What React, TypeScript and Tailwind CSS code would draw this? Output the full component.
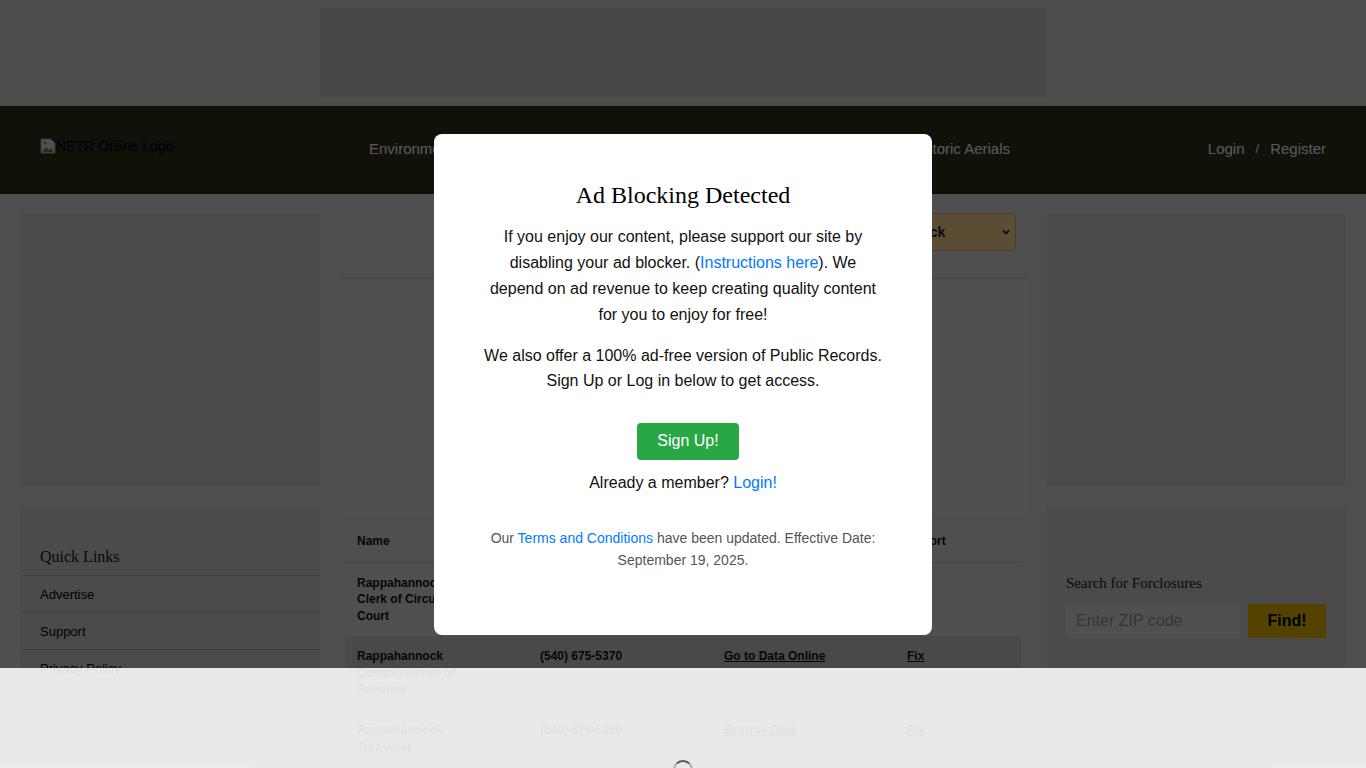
import React from 'react'

const sans = { fontFamily: '"Liberation Sans", Arial, sans-serif' }
const serif = { fontFamily: '"Liberation Serif", "Times New Roman", serif' }

const rows = [
  { name: 'Rappahannock Clerk of Circuit Court', phone: '(540) 675-5350', link: 'Go to Data Online', fix: 'Fix' },
  { name: 'Rappahannock Commissioner of Revenue', phone: '(540) 675-5370', link: 'Go to Data Online', fix: 'Fix' },
  { name: 'Rappahannock Treasurer', phone: '(540) 675-5380', link: 'Browse Data', fix: 'Fix' },
  { name: 'Rappahannock County Assessor', phone: '(540) 675-5372', link: 'Go to Data Online', fix: 'Fix' },
]

function BrokenImage() {
  return (
    <svg width="16" height="16" viewBox="0 0 16 16" className="shrink-0">
      <path d="M1 1h10l4 4v10H1z" fill="#e8e8e8" stroke="#9a9a9a" />
      <path d="M2 14l4-5 3 3 2-2 3 4z" fill="#4a9a4a" />
      <circle cx="5" cy="5" r="1.5" fill="#5a8ad0" />
    </svg>
  )
}

function Chevron() {
  return (
    <svg width="10" height="10" viewBox="0 0 10 10">
      <path d="M2 3.5l3 3 3-3" fill="none" stroke="#222" strokeWidth="1.8" />
    </svg>
  )
}

export default function App() {
  return (
    <div className="relative h-[768px] overflow-hidden bg-[#e2e2e2]" style={sans}>
      {/* top ad */}
      <div className="h-[106px] bg-[#dcdcdc] pt-2">
        <div className="mx-auto h-[89px] w-[726px] bg-[#cbcbcb] border border-[#d2d2d2]" />
      </div>

      {/* header */}
      <header className="flex h-[88px] items-center bg-[#31311f] pl-10 pr-10">
        <div className="flex w-[329px] items-start self-start pt-[32px] text-[14px] leading-[16px] text-black">
          <BrokenImage />
          <span>NETR Online Logo</span>
        </div>
        <nav className="-mt-[2px] flex w-[641px] justify-between text-[15px] text-white">
          <a>Environmental</a>
          <a>Public Records</a>
          <a>Property Search</a>
          <a>Historic Aerials</a>
        </nav>
        <div className="-mt-[2px] ml-auto flex items-center gap-[11px] text-[15px] text-white">
          <a>Login</a>
          <span className="text-[13px]">/</span>
          <a>Register</a>
        </div>
      </header>

      {/* body */}
      <div className="grid grid-cols-[300px_1fr_299px] gap-[18px] px-5 pt-[19px]">
        {/* left */}
        <aside className="flex flex-col gap-[21px]">
          <div className="h-[272px] bg-[#d5d5d5]" />
          <div className="bg-[#d6d6d6] pt-[39px] pb-3">
            <h3 className="px-5 pb-[6px] text-[16px] leading-[24px] text-[#1a1a1a]" style={serif}>Quick Links</h3>
            {['Advertise', 'Support', 'Privacy Policy'].map((l) => (
              <div key={l} className="border-t border-[#b5b5b5] px-5 pt-[9px] pb-[7px] text-[13px] leading-[20px] text-black">
                {l}
              </div>
            ))}
          </div>
        </aside>

        {/* center */}
        <main>
          <div className="flex h-[38px] justify-end gap-2 pr-[13px]">
            <div className="flex w-[150px] items-center justify-between rounded border border-[#c9b27a] bg-[#ffe095] px-3 text-[14px] font-bold text-[#222]">
              Virginia <Chevron />
            </div>
            <div className="flex w-[184px] items-center justify-between rounded border border-[#c9b27a] bg-[#ffe095] pl-3 pr-[4px] text-[14px] font-bold text-[#222]">
              Rappahannock <Chevron />
            </div>
          </div>
          <div className="mt-[27px] border-t border-[#c4c4c4]" />
          <div className="h-[236px] bg-[#e5e5e5]" />
          <table className="mx-[7px] mt-[5px] w-[676px] border-collapse text-left text-[12px] text-[#111]">
            <thead>
              <tr className="h-[42px] border-b border-[#c8c8c8]">
                <th className="w-[183px] pl-3 font-bold">Name</th>
                <th className="w-[184px] pl-3 font-bold">Phone</th>
                <th className="w-[183px] pl-3 font-bold">Online</th>
                <th className="pl-3 font-bold">Report</th>
              </tr>
            </thead>
            <tbody>
              {rows.map((r, i) => (
                <tr key={r.name} className={`h-[74px] align-top ${i % 2 === 1 ? 'bg-[#d2d2d2]' : ''}`}>
                  <td className="py-3 pl-3 pr-16 font-semibold leading-[16.5px]">{r.name}</td>
                  <td className="py-3 pl-3 font-semibold leading-[16.5px]">{r.phone}</td>
                  <td className="py-3 pl-3 font-semibold leading-[16.5px] underline">{r.link}</td>
                  <td className="py-3 pl-3 font-semibold leading-[16.5px] underline">{r.fix}</td>
                </tr>
              ))}
            </tbody>
          </table>
        </main>

        {/* right */}
        <aside className="flex flex-col gap-[21px]">
          <div className="h-[272px] bg-[#d5d5d5]" />
          <div className="bg-[#d6d6d6] px-[19px] pt-[66px] pb-8">
            <h3 className="mb-[9px] text-[15px] text-[#1a1a1a]" style={serif}>Search for Forclosures</h3>
            <div className="flex gap-2">
              <div className="flex h-[34px] w-[174px] items-center bg-[#e6e6e6] px-[10px] text-[16px] text-[#999]">
                Enter ZIP code
              </div>
              <button className="h-[34px] w-[78px] bg-[#f0bf00] text-[16px] font-bold text-black">Find!</button>
            </div>
          </div>
        </aside>
      </div>

      {/* overlay */}
      <div className="absolute inset-0 flex items-center justify-center bg-black/65">
        <div className="h-[501px] w-[498px] rounded-lg bg-white px-12 pt-[47px] text-center">
          <h2 className="mb-[15px] text-[24px] leading-[28px] text-black" style={serif}>Ad Blocking Detected</h2>
          <p className="text-[16px] leading-[26px] text-[#111]">
            If you enjoy our content, please support our site by disabling your ad blocker. (
            <a className="text-[#007bff]">Instructions here</a>). We depend on ad revenue to keep creating quality
            content for you to enjoy for free!
          </p>
          <p className="mt-[15px] text-[16px] leading-[25px] text-[#111]">
            We also offer a 100% ad-free version of Public Records. Sign Up or Log in below to get access.
          </p>
          <button className="mt-[30px] ml-[10px] h-[37px] w-[102px] rounded bg-[#28a745] text-[16px] text-white">
            Sign Up!
          </button>
          <p className="mt-[10px] text-[16px] leading-[25.6px] text-[#111]">
            Already a member? <a className="text-[#007bff]">Login!</a>
          </p>
          <p className="mt-[32px] text-[14px] leading-[22px] text-[#555]">
            Our <a className="text-[#007bff]">Terms and Conditions</a> have been updated. Effective Date: September 19,
            2025.
          </p>
        </div>
      </div>

      {/* bottom bar */}
      <div className="absolute bottom-0 left-0 right-0 flex h-[100px] justify-center bg-white/[0.88]">
        <div className="mt-[92px] h-5 w-5 rounded-full border-2 border-[#aaa] border-t-[#555]" />
      </div>
    </div>
  )
}
